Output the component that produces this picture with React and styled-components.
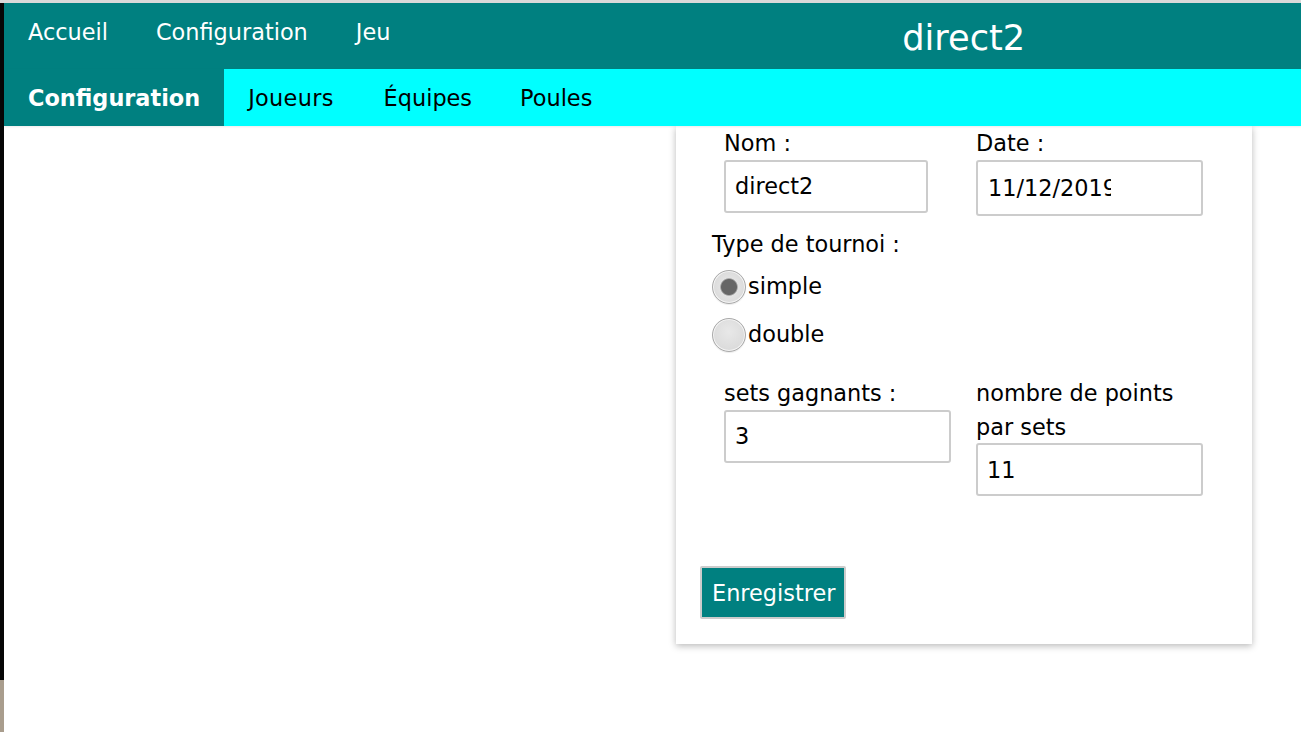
import React, { useState } from "react";
import styled, { createGlobalStyle } from "styled-components";

const GlobalStyle = createGlobalStyle`
    html, body {
        margin: 0;
        padding: 0;
        background: #ffffff;
    }
    body {
        font-family: "DejaVu Sans", Verdana, sans-serif;
        color: #000;
    }
`;

const Page = styled.div`
    display: grid;
    grid-template-columns: 4px 1fr;
    min-height: 729px;
    border-top: 3px solid #dadada;
`;

const Edge = styled.div`
    background: linear-gradient(to bottom, #060606 0, #060606 677px, #a99d8d 677px);
`;

const Main = styled.div`
    display: flex;
    flex-direction: column;
    min-width: 0;
`;

const Header = styled.header`
    display: grid;
    grid-template-columns: 1fr 1fr;
    height: 66px;
    background: #008080;
`;

const MainNav = styled.nav`
    display: flex;
    align-items: flex-start;
`;

const NavLink = styled.a`
    padding: 16px 24px 0;
    font-size: 22.4px;
    color: #ffffff;
    text-decoration: none;
    cursor: pointer;
`;

const Title = styled.h1`
    margin: 0;
    padding: 14px 26px 0 0;
    text-align: center;
    font-size: 35.2px;
    font-weight: normal;
    color: #ffffff;
`;

const SubNav = styled.nav`
    position: relative;
    z-index: 1;
    display: flex;
    height: 57px;
    background: #00ffff;
    box-shadow: 0 1px 2px rgba(0, 0, 0, 0.08);
`;

const Tab = styled.a`
    padding: 16px ${(p) => (p.$wide ? 26 : 24)}px 0 24px;
    font-size: 22.4px;
    font-weight: ${(p) => (p.$active ? "bold" : "normal")};
    color: ${(p) => (p.$active ? "#ffffff" : "#000000")};
    background: ${(p) => (p.$active ? "#008080" : "transparent")};
    letter-spacing: ${(p) => (p.$wide ? "0.3px" : "normal")};
    cursor: pointer;
`;

const Content = styled.main`
    display: flex;
    justify-content: flex-end;
    padding-right: 49px;
`;

const Card = styled.form`
    width: 576px;
    box-sizing: border-box;
    padding: 0 24px 25px;
    background: #ffffff;
    box-shadow: 0 2px 7px rgba(0, 0, 0, 0.28);
    font-size: 22.4px;
    line-height: 33.6px;
`;

const FieldRow = styled.div`
    display: grid;
    grid-template-columns: 252px 1fr;
    align-items: start;
    padding-left: 24px;
    margin-top: ${(p) => p.$top || 0}px;
`;

const Field = styled.div`
    display: flex;
    flex-direction: column;
    align-items: flex-start;
`;

const Label = styled.label`
    display: block;
    width: 210px;
    padding-top: 1px;
    margin-bottom: -1px;
`;

const Input = styled.input`
    box-sizing: border-box;
    width: ${(p) => p.$w}px;
    height: ${(p) => p.$h || 53}px;
    padding: 0 ${(p) => p.$pr || 8}px 0 ${(p) => p.$pl || 9}px;
    border: 2px solid #cccccc;
    border-radius: 3px;
    font-family: inherit;
    font-size: 22.4px;
    color: #000;
    background: #fff;
    outline: none;
`;

const GroupTitle = styled.div`
    margin-top: 12px;
    padding-left: 12px;
`;

const RadioGroup = styled.div`
    padding-top: 2px;
`;

const RadioRow = styled.label`
    display: flex;
    align-items: center;
    height: 48px;
    padding-left: 12px;
    cursor: pointer;
`;

const Radio = styled.input`
    appearance: none;
    box-sizing: border-box;
    width: 34px;
    height: 34px;
    margin: 0 2px 0 0;
    border-radius: 50%;
    border: 1px solid #a9a9a9;
    background: ${(p) =>
        p.checked
            ? "radial-gradient(circle, #666666 0 7.5px, #a0a0a0 8.3px, #e2e2e2 9.2px, #d4d4d4 100%)"
            : "radial-gradient(circle at 50% 40%, #e8e8e8 0, #d6d6d6 100%)"};
    box-shadow: inset 0 0 0 1px #f4f4f4, 0 1px 1px rgba(0, 0, 0, 0.08);
`;

const SaveButton = styled.button`
    margin-top: 70px;
    height: 53px;
    padding: 0 9px 0 10px;
    border: 2px solid #cccccc;
    border-radius: 2px;
    background: #008080;
    color: #ffffff;
    font-family: inherit;
    font-size: 22.4px;
    cursor: pointer;
`;

const App = () => {
    const [type, setType] = useState("simple");
    const [nom, setNom] = useState("direct2");
    const [sets, setSets] = useState("3");
    const [points, setPoints] = useState("11");

    return (
        <>
            <GlobalStyle />
            <Page>
                <Edge />
                <Main>
                    <Header>
                        <MainNav>
                            <NavLink>Accueil</NavLink>
                            <NavLink>Configuration</NavLink>
                            <NavLink>Jeu</NavLink>
                        </MainNav>
                        <Title>direct2</Title>
                    </Header>
                    <SubNav>
                        <Tab $active>Configuration</Tab>
                        <Tab $wide>Joueurs</Tab>
                        <Tab>Équipes</Tab>
                        <Tab>Poules</Tab>
                    </SubNav>
                    <Content>
                        <Card onSubmit={(e) => e.preventDefault()}>
                            <FieldRow>
                                <Field>
                                    <Label>Nom :</Label>
                                    <Input $w={204} value={nom} onChange={(e) => setNom(e.target.value)} />
                                </Field>
                                <Field>
                                    <Label>Date :</Label>
                                    <Input $w={227} $h={56} $pl={10} $pr={90} defaultValue="11/12/2019" />
                                </Field>
                            </FieldRow>
                            <GroupTitle>Type de tournoi :</GroupTitle>
                            <RadioGroup>
                                <RadioRow>
                                    <Radio
                                        type="radio"
                                        name="type"
                                        checked={type === "simple"}
                                        onChange={() => setType("simple")}
                                    />
                                    simple
                                </RadioRow>
                                <RadioRow>
                                    <Radio
                                        type="radio"
                                        name="type"
                                        checked={type === "double"}
                                        onChange={() => setType("double")}
                                    />
                                    double
                                </RadioRow>
                            </RadioGroup>
                            <FieldRow $top={17}>
                                <Field>
                                    <Label>sets gagnants :</Label>
                                    <Input $w={227} value={sets} onChange={(e) => setSets(e.target.value)} />
                                </Field>
                                <Field>
                                    <Label>nombre de points par sets</Label>
                                    <Input $w={227} value={points} onChange={(e) => setPoints(e.target.value)} />
                                </Field>
                            </FieldRow>
                            <SaveButton type="submit">Enregistrer</SaveButton>
                        </Card>
                    </Content>
                </Main>
            </Page>
        </>
    );
};

export default App;
